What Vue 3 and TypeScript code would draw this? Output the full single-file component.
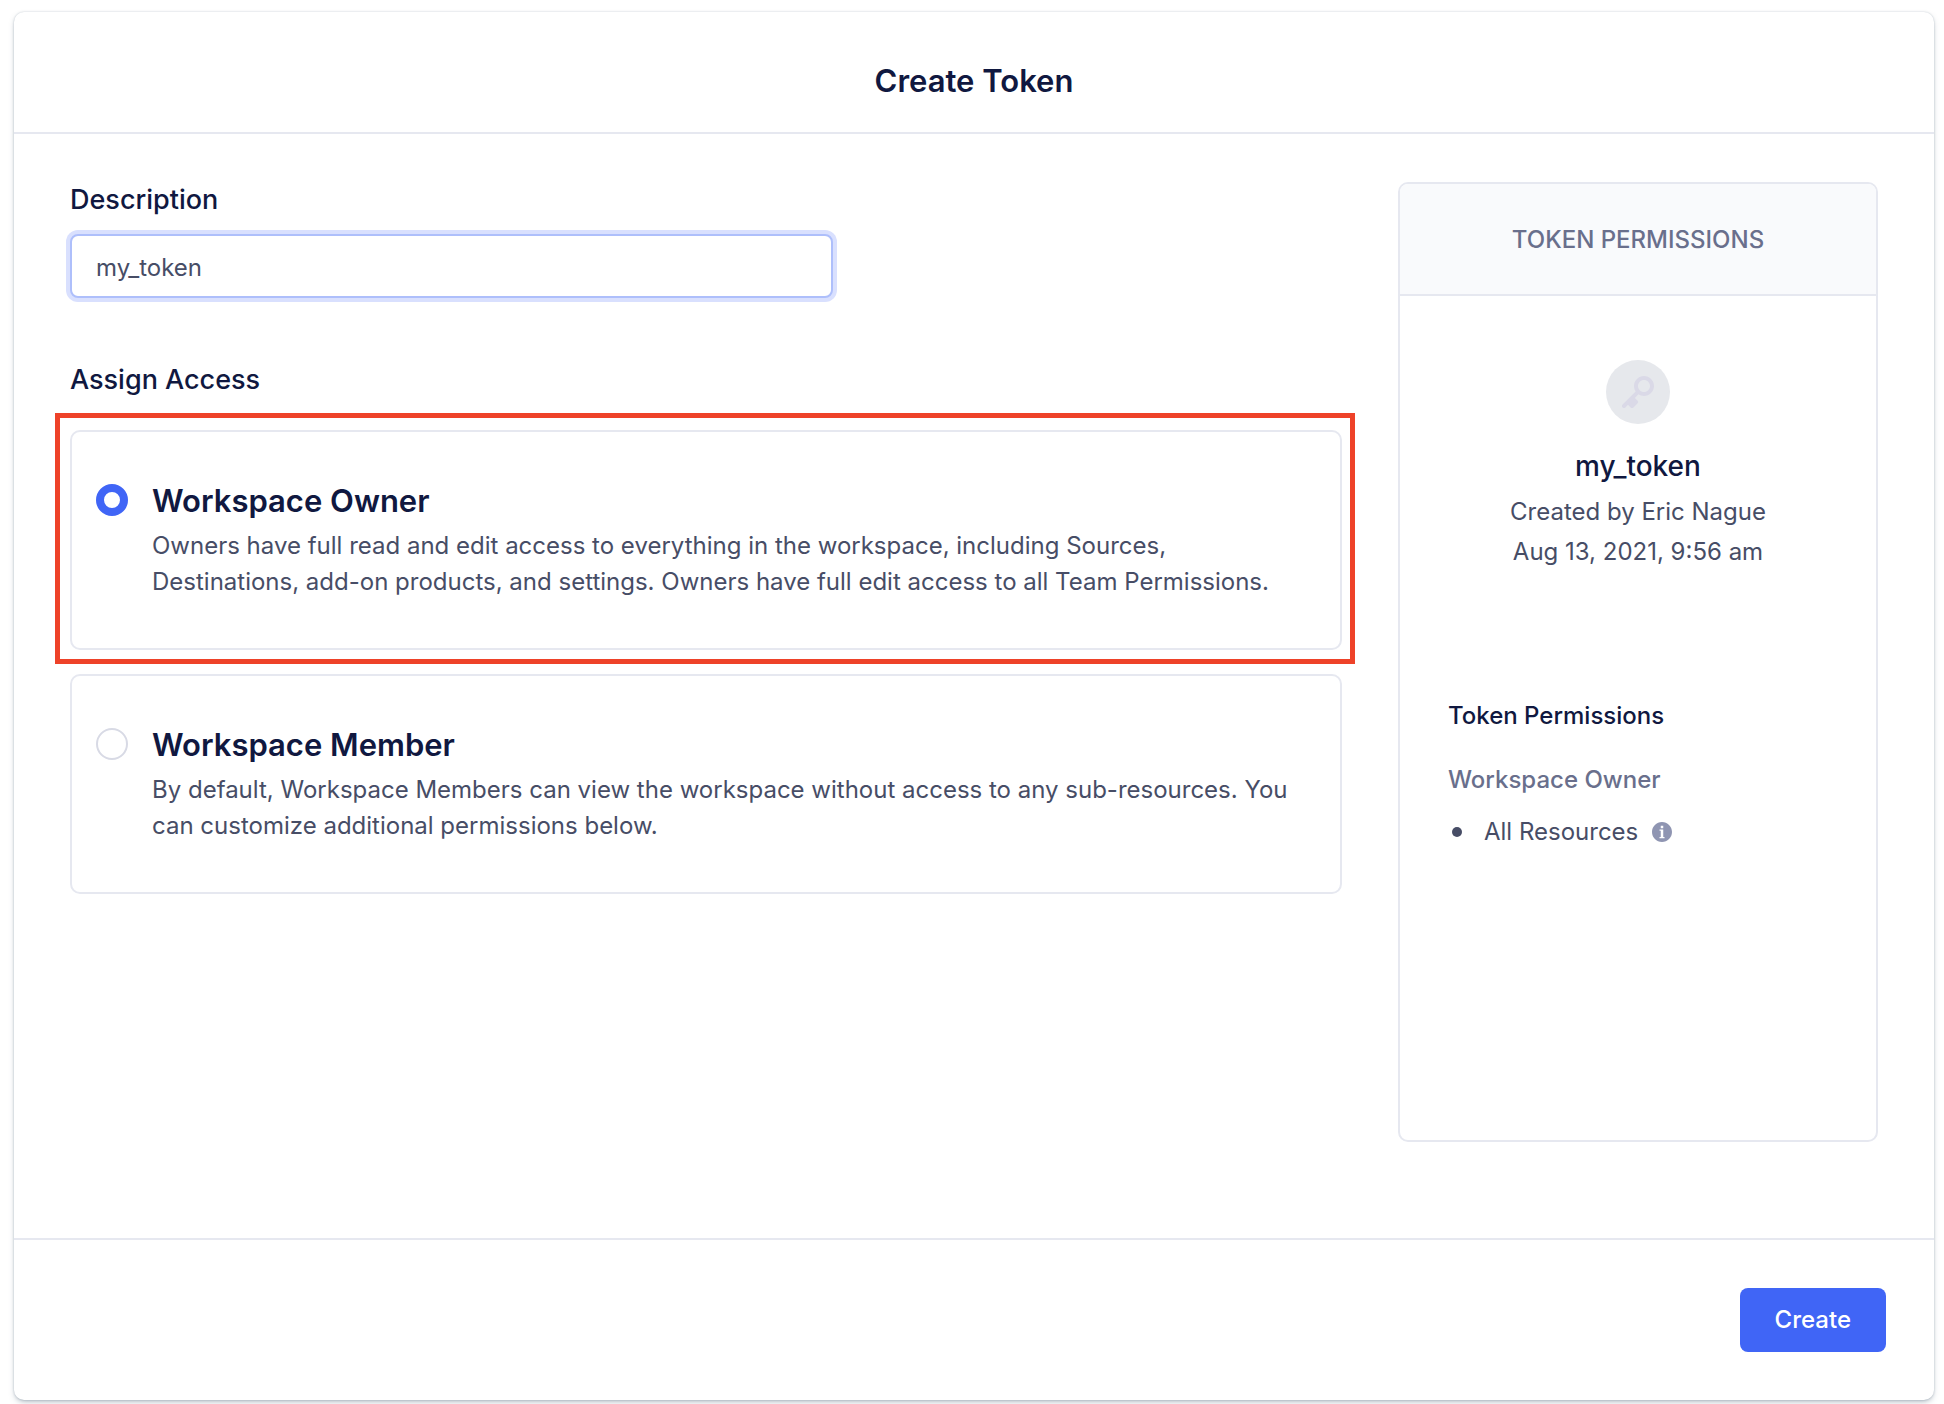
<script setup lang="ts">
import { computed, ref } from 'vue'

interface Role {
  id: string
  name: string
  description: string
  highlighted: boolean
}

const roles: Role[] = [
  {
    id: 'owner',
    name: 'Workspace Owner',
    description:
      'Owners have full read and edit access to everything in the workspace, including Sources, Destinations, add-on products, and settings. Owners have full edit access to all Team Permissions.',
    highlighted: true,
  },
  {
    id: 'member',
    name: 'Workspace Member',
    description:
      'By default, Workspace Members can view the workspace without access to any sub-resources. You can customize additional permissions below.',
    highlighted: false,
  },
]

const description = ref('my_token')
const selected = ref('owner')
const selectedRole = computed(() => roles.find((role) => role.id === selected.value))
</script>

<template>
  <main class="page">
    <form class="dialog" @submit.prevent>
      <header class="dialog-header">
        <h1>Create Token</h1>
      </header>

      <div class="dialog-body">
        <div class="fields">
          <label class="field-label" for="description">Description</label>
          <input id="description" v-model="description" class="text-input" type="text" autocomplete="off" />

          <fieldset class="access">
            <legend class="field-label">Assign Access</legend>
            <div class="roles">
              <label
                v-for="role in roles"
                :key="role.id"
                class="role"
                :class="{ highlighted: role.highlighted }"
              >
                <input v-model="selected" class="radio" type="radio" name="role" :value="role.id" />
                <span class="role-text">
                  <span class="role-name">{{ role.name }}</span>
                  <span class="role-description">{{ role.description }}</span>
                </span>
              </label>
            </div>
          </fieldset>
        </div>

        <aside class="summary">
          <h2 class="summary-header">TOKEN PERMISSIONS</h2>
          <div class="summary-body">
            <div class="identity">
              <span class="avatar">
                <svg viewBox="0 0 16 16" width="32" height="32" aria-hidden="true">
                  <path
                    fill="currentColor"
                    fill-rule="evenodd"
                    d="M11 0C8.24 0 6 2.24 6 5c0 1.02.31 1.96.83 2.75L.29 14.29a1.003 1.003 0 001.42 1.42L3 14.41l1.29 1.29c.18.19.43.3.71.3s.53-.11.71-.29l2-2a1.003 1.003 0 000-1.42L6.41 11l1.83-1.83c.8.52 1.74.83 2.76.83 2.76 0 5-2.24 5-5s-2.24-5-5-5zm0 8c-1.66 0-3-1.34-3-3s1.34-3 3-3 3 1.34 3 3-1.34 3-3 3z"
                  />
                </svg>
              </span>
              <p class="token-name">{{ description }}</p>
              <p class="meta">Created by Eric Nague</p>
              <p class="meta">Aug 13, 2021, 9:56 am</p>
            </div>

            <h3 class="permissions-title">Token Permissions</h3>
            <p class="permissions-role">{{ selectedRole?.name }}</p>
            <ul class="resources">
              <li>
                <span>All Resources</span>
                <svg class="info" viewBox="0 0 16 16" width="20" height="20" aria-hidden="true">
                  <path
                    fill="currentColor"
                    fill-rule="evenodd"
                    d="M8 0C3.58 0 0 3.58 0 8s3.58 8 8 8 8-3.58 8-8-3.58-8-8-8zM7 3h2v2H7V3zm3 10H6v-1h1V7H6V6h3v6h1v1z"
                  />
                </svg>
              </li>
            </ul>
          </div>
        </aside>
      </div>

      <footer class="dialog-footer">
        <button class="create" type="submit">Create</button>
      </footer>
    </form>
  </main>
</template>

<style>
body {
  background: #ffffff;
}
</style>

<style scoped>
* {
  box-sizing: border-box;
}

.page {
  padding: 12px 10px 4px 14px;
  color: #474d66;
  font-family: Inter, 'Liberation Sans', sans-serif;
  font-size: 24px;
  line-height: 36px;
}

h1,
h2,
h3,
p,
ul,
fieldset,
legend {
  margin: 0;
  padding: 0;
  border: 0;
}

.dialog {
  border-radius: 10px;
  background: #ffffff;
  box-shadow: 0 0 2px rgba(67, 90, 111, 0.3), 0 3px 6px -2px rgba(67, 90, 111, 0.5);
}

.dialog-header {
  padding: 48px 48px 30px;
  border-bottom: 2px solid #e6e8f0;
  text-align: center;
}

h1 {
  color: #101840;
  font-size: 31px;
  font-weight: 600;
  line-height: 42px;
}

.dialog-body {
  display: flex;
  align-items: flex-start;
  gap: 56px;
  padding: 48px 56px 96px;
}

.fields {
  flex: 1;
  min-width: 0;
}

.field-label {
  display: block;
  color: #101840;
  font-size: 27px;
  font-weight: 500;
}

.text-input {
  display: block;
  width: 60%;
  height: 64px;
  margin-top: 16px;
  padding: 2px 24px 0;
  border: 2px solid #aebffb;
  border-radius: 8px;
  outline: none;
  background: #ffffff;
  box-shadow: 0 0 0 4px #d9e0fe;
  color: #474d66;
  font: inherit;
}

.access {
  min-width: 0;
  margin-top: 64px;
}

.roles {
  display: flex;
  flex-direction: column;
  gap: 24px;
  padding-top: 32px;
}

.role {
  position: relative;
  display: flex;
  align-items: flex-start;
  gap: 24px;
  padding: 48px 48px 48px 24px;
  border: 2px solid #e6e8f0;
  border-radius: 10px;
}

.highlighted::after {
  content: '';
  position: absolute;
  inset: -19px -15px -16px -17px;
  border: 5px solid #ee4229;
  pointer-events: none;
}

.radio {
  flex: none;
  appearance: none;
  width: 32px;
  height: 32px;
  margin: 4px 0 0;
  border: 2px solid #d8dae5;
  border-radius: 50%;
  background: #ffffff;
}

.radio:checked {
  border: 8px solid #4065f6;
}

.role-text {
  flex: 1;
  min-width: 0;
}

.role-name,
.role-description {
  display: block;
}

.role-name {
  margin-bottom: 6px;
  color: #101840;
  font-size: 31px;
  font-weight: 600;
  line-height: 42px;
}

.summary {
  flex: none;
  width: 480px;
  min-height: 960px;
  border: 2px solid #e6e8f0;
  border-radius: 10px;
  overflow: hidden;
}

.summary-header {
  padding: 38px 24px 36px;
  border-bottom: 2px solid #e6e8f0;
  background: #f9fafc;
  color: #696f8c;
  font-size: 24px;
  font-weight: 500;
  text-align: center;
}

.summary-body {
  padding: 64px 48px;
}

.identity {
  display: flex;
  flex-direction: column;
  align-items: center;
}

.avatar {
  display: flex;
  align-items: center;
  justify-content: center;
  width: 64px;
  height: 64px;
  border-radius: 50%;
  background: #e6e8ec;
  color: #dad9e7;
}

.token-name {
  margin: 24px 0 8px;
  color: #101840;
  font-size: 28px;
  font-weight: 500;
}

.meta {
  line-height: 40px;
}

.permissions-title,
.permissions-role {
  font-size: 24px;
  font-weight: 500;
  line-height: 32px;
}

.permissions-title {
  margin-top: 128px;
  color: #101840;
}

.permissions-role {
  margin-top: 32px;
  color: #696f8c;
}

.resources {
  margin-top: 20px;
  list-style: none;
  line-height: 32px;
}

.resources li {
  display: flex;
  align-items: center;
}

.resources li::before {
  content: '';
  width: 10px;
  height: 10px;
  margin: 0 22px 0 4px;
  border-radius: 50%;
  background: #474d66;
}

.info {
  margin-left: 14px;
  color: #8f95b2;
}

.dialog-footer {
  display: flex;
  justify-content: flex-end;
  padding: 48px;
  border-top: 2px solid #e6e8f0;
}

.create {
  height: 64px;
  padding: 0 35px;
  border: 0;
  border-radius: 8px;
  background: #4065f6;
  color: #ffffff;
  font: inherit;
  font-weight: 500;
}
</style>
